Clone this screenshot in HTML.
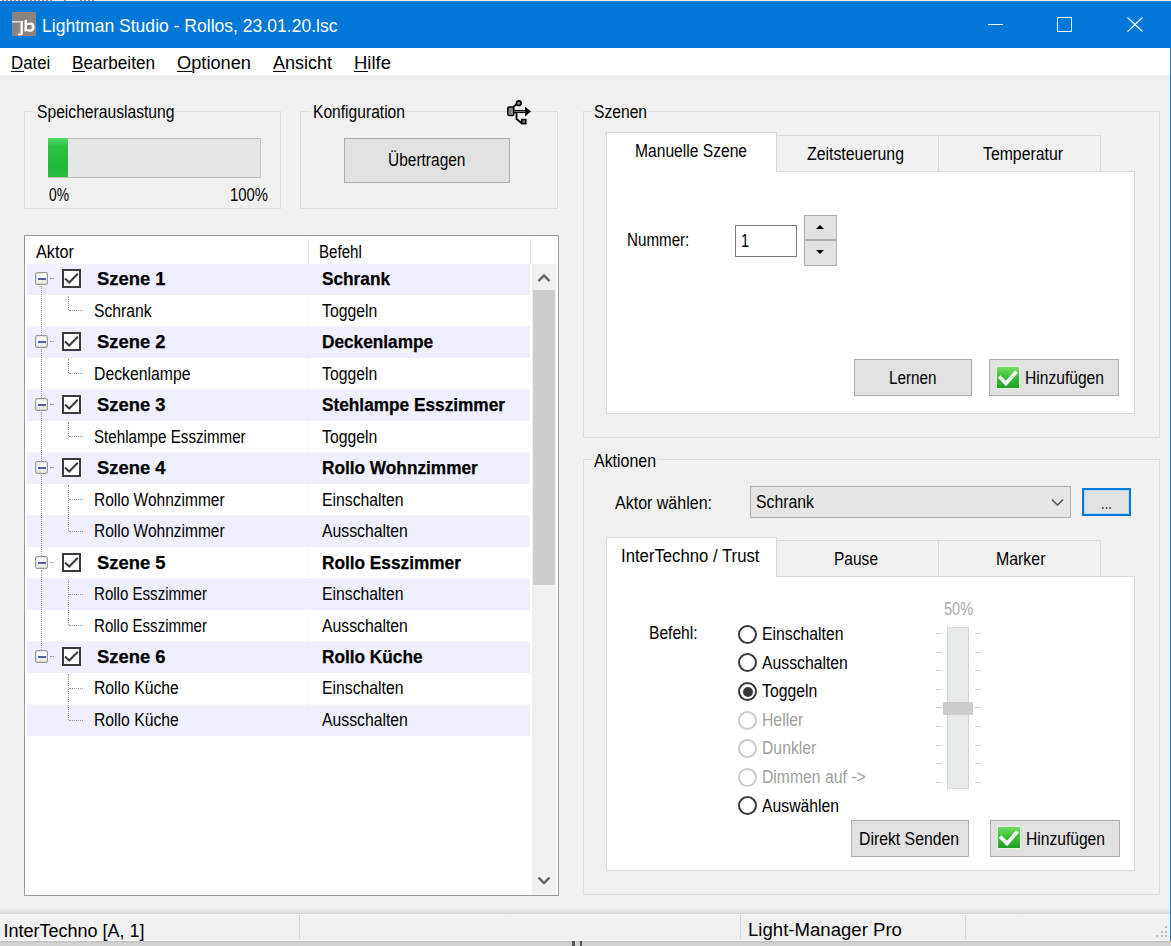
<!DOCTYPE html>
<html><head><meta charset="utf-8"><style>
html,body{margin:0;padding:0;}
body{width:1171px;height:946px;position:relative;overflow:hidden;background:#f0f0f0;font-family:"Liberation Sans",sans-serif;}
body>div{position:absolute;}
.t{white-space:nowrap;}
</style></head><body>
<div style="left:0px;top:0px;width:1171px;height:1px;background:#eef2f6;"></div>
<div style="left:2px;top:0;width:52px;height:1px;background:repeating-linear-gradient(90deg,#8d97a3 0 2px,#eef2f6 2px 4px);"></div>
<div style="left:64px;top:0px;width:2px;height:1px;background:#8d97a3;"></div>
<div style="left:80px;top:0;width:16px;height:1px;background:repeating-linear-gradient(90deg,#8d97a3 0 2px,#eef2f6 2px 4px);"></div>
<div style="left:0px;top:1px;width:1171px;height:47px;background:#0078d7;"></div>
<svg style="position:absolute;left:12px;top:12px" width="24" height="24" viewBox="0 0 24 24">
<rect width="24" height="24" fill="#8a847f"/>
<rect x="0" y="9" width="8" height="1.6" fill="#e0dcd8"/>
<path d="M8.5 9 L10.8 9 L10.8 21.5 Q10.8 23.3 9 23.3 L6 23.3 L6 21.6 L8.5 21.6 Z" fill="#fff"/>
<path d="M12.5 8 L15 8 L15 11.2 Q16 10.6 18 10.6 Q22.6 10.6 22.6 15 Q22.6 19.8 18 19.8 Q15.6 19.8 14.6 18.8 L14.4 19.6 L12.5 19.6 Z M15 13.2 L15 17 Q15.8 17.6 17.6 17.6 Q20 17.6 20 15.1 Q20 12.8 17.6 12.8 Q15.8 12.8 15 13.2 Z" fill="#fff" fill-rule="evenodd"/>
</svg>
<div class="t" style="left:42.00px;top:16.50px;font-size:18px;line-height:18px;color:#fff;transform:scaleX(0.9746);transform-origin:0 0;">Lightman Studio - Rollos, 23.01.20.lsc</div>
<div style="left:988px;top:24px;width:15px;height:1px;background:#fff;"></div>
<div style="left:1057px;top:17px;width:15px;height:15px;border:1px solid #fff;box-sizing:border-box;"></div>
<svg style="position:absolute;left:1126px;top:16px" width="18" height="17"><path d="M1.5 1.5 L16.5 15.5 M16.5 1.5 L1.5 15.5" stroke="#fff" stroke-width="1.1" fill="none"/></svg>
<div style="left:0px;top:48px;width:1170px;height:27px;background:#fff;"></div>
<div style="left:1170px;top:48px;width:1px;height:893px;background:#2a7bc4;"></div>
<div class="t" style="left:11.30px;top:54.55px;font-size:17.5px;line-height:17.5px;color:#000;transform:scaleX(0.9618);transform-origin:0 0;">Datei</div>
<div style="left:11px;top:71px;width:13px;height:1px;background:#000;"></div>
<div class="t" style="left:72.40px;top:54.55px;font-size:17.5px;line-height:17.5px;color:#000;transform:scaleX(0.9809);transform-origin:0 0;">Bearbeiten</div>
<div style="left:72px;top:71px;width:13px;height:1px;background:#000;"></div>
<div class="t" style="left:177.00px;top:54.55px;font-size:17.5px;line-height:17.5px;color:#000;transform:scaleX(1.0415);transform-origin:0 0;">Optionen</div>
<div style="left:177px;top:71px;width:15px;height:1px;background:#000;"></div>
<div class="t" style="left:273.30px;top:54.55px;font-size:17.5px;line-height:17.5px;color:#000;transform:scaleX(1.0296);transform-origin:0 0;">Ansicht</div>
<div style="left:273px;top:71px;width:13px;height:1px;background:#000;"></div>
<div class="t" style="left:354.20px;top:54.55px;font-size:17.5px;line-height:17.5px;color:#000;transform:scaleX(1.0543);transform-origin:0 0;">Hilfe</div>
<div style="left:354px;top:71px;width:14px;height:1px;background:#000;"></div>
<div style="left:24px;top:111px;width:257px;height:98px;border:1px solid #dcdcdc;box-sizing:border-box;"></div>
<div style="left:34px;top:103px;width:141px;height:16px;background:#f0f0f0;"></div>
<div class="t" style="left:36.50px;top:103.75px;font-size:17.5px;line-height:17.5px;color:#000;transform:scaleX(0.8944);transform-origin:0 0;">Speicherauslastung</div>
<div style="left:48px;top:138px;width:213px;height:40px;border:1px solid #bcbcbc;box-sizing:border-box;background:#e6e6e6;"></div>
<div style="left:48px;top:138px;width:20px;height:39px;background:linear-gradient(#58dc6c,#2cc244 20%,#20b83a 80%,#2bbf45);"></div>
<div class="t" style="left:48.50px;top:186.75px;font-size:17.5px;line-height:17.5px;color:#000;transform:scaleX(0.7909);transform-origin:0 0;">0%</div>
<div class="t" style="left:230.00px;top:186.75px;font-size:17.5px;line-height:17.5px;color:#000;transform:scaleX(0.8482);transform-origin:0 0;">100%</div>
<div style="left:300px;top:111px;width:258px;height:98px;border:1px solid #dcdcdc;box-sizing:border-box;"></div>
<div style="left:311px;top:103px;width:95px;height:16px;background:#f0f0f0;"></div>
<div class="t" style="left:312.60px;top:103.75px;font-size:17.5px;line-height:17.5px;color:#000;transform:scaleX(0.8918);transform-origin:0 0;">Konfiguration</div>
<svg style="position:absolute;left:500px;top:96px" width="36" height="32" viewBox="0 0 36 32">
<path d="M12.5 12 L17.5 7" stroke="#000" stroke-width="1.8" fill="none"/>
<circle cx="18.8" cy="7.2" r="2.3" fill="#888" stroke="#000" stroke-width="1.6"/>
<rect x="7.8" y="11" width="6" height="8.5" rx="1.6" fill="#8a8a8a" stroke="#000" stroke-width="1.6"/>
<path d="M13.5 15.5 L26 15.5" stroke="#000" stroke-width="3.2" fill="none"/>
<path d="M14 15.5 L25 15.5" stroke="#777" stroke-width="1" fill="none"/>
<path d="M25 10.5 L31 15.5 L25 20.5 Z" fill="#000"/>
<path d="M16.5 16 L16.5 23 L21.5 27" stroke="#000" stroke-width="1.8" fill="none"/>
<rect x="21.8" y="23.6" width="4" height="4" fill="#888" stroke="#000" stroke-width="1.6"/>
</svg>
<div style="left:344px;top:138px;width:166px;height:45px;background:#e1e1e1;border:1px solid #adadad;box-sizing:border-box;"></div>
<div class="t" style="left:388.00px;top:152.25px;font-size:17.5px;line-height:17.5px;color:#000;transform:scaleX(0.8848);transform-origin:0 0;">Übertragen</div>
<div style="left:24px;top:235px;width:535px;height:661px;border:1px solid #9a9a9a;box-sizing:border-box;background:#fff;"></div>
<div class="t" style="left:36.00px;top:244.25px;font-size:17.5px;line-height:17.5px;color:#000;transform:scaleX(0.9299);transform-origin:0 0;">Aktor</div>
<div class="t" style="left:319.00px;top:244.25px;font-size:17.5px;line-height:17.5px;color:#000;transform:scaleX(0.8627);transform-origin:0 0;">Befehl</div>
<div style="left:308px;top:239px;width:1px;height:25px;background:#e5e5e5;"></div>
<div style="left:530px;top:239px;width:1px;height:25px;background:#e5e5e5;"></div>
<div style="left:27px;top:264.00px;width:503px;height:31.47px;background:#efeffd;"></div>
<div style="left:27px;top:294.47px;width:503px;height:1px;border-top:1px dotted #eeeef4;"></div>
<div class="t" style="left:96.80px;top:271.35px;font-size:17.5px;line-height:17.5px;font-weight:bold;color:#000;transform:scaleX(1.0500);transform-origin:0 0;-webkit-text-stroke:0.25px #000;">Szene 1</div>
<div class="t" style="left:321.70px;top:271.35px;font-size:17.5px;line-height:17.5px;font-weight:bold;color:#000;transform:scaleX(0.9850);transform-origin:0 0;-webkit-text-stroke:0.25px #000;">Schrank</div>
<div style="left:27px;top:325.94px;width:503px;height:1px;border-top:1px dotted #eeeef4;"></div>
<div class="t" style="left:94.00px;top:302.82px;font-size:17.5px;line-height:17.5px;color:#000;transform:scaleX(0.8987);transform-origin:0 0;">Schrank</div>
<div class="t" style="left:321.50px;top:302.82px;font-size:17.5px;line-height:17.5px;color:#000;transform:scaleX(0.9000);transform-origin:0 0;">Toggeln</div>
<div style="left:27px;top:326.94px;width:503px;height:31.47px;background:#efeffd;"></div>
<div style="left:27px;top:357.41px;width:503px;height:1px;border-top:1px dotted #eeeef4;"></div>
<div class="t" style="left:96.80px;top:334.29px;font-size:17.5px;line-height:17.5px;font-weight:bold;color:#000;transform:scaleX(1.0500);transform-origin:0 0;-webkit-text-stroke:0.25px #000;">Szene 2</div>
<div class="t" style="left:321.70px;top:334.29px;font-size:17.5px;line-height:17.5px;font-weight:bold;color:#000;transform:scaleX(0.9850);transform-origin:0 0;-webkit-text-stroke:0.25px #000;">Deckenlampe</div>
<div style="left:27px;top:388.88px;width:503px;height:1px;border-top:1px dotted #eeeef4;"></div>
<div class="t" style="left:94.00px;top:365.76px;font-size:17.5px;line-height:17.5px;color:#000;transform:scaleX(0.9018);transform-origin:0 0;">Deckenlampe</div>
<div class="t" style="left:321.50px;top:365.76px;font-size:17.5px;line-height:17.5px;color:#000;transform:scaleX(0.9000);transform-origin:0 0;">Toggeln</div>
<div style="left:27px;top:389.88px;width:503px;height:31.47px;background:#efeffd;"></div>
<div style="left:27px;top:420.35px;width:503px;height:1px;border-top:1px dotted #eeeef4;"></div>
<div class="t" style="left:96.80px;top:397.23px;font-size:17.5px;line-height:17.5px;font-weight:bold;color:#000;transform:scaleX(1.0500);transform-origin:0 0;-webkit-text-stroke:0.25px #000;">Szene 3</div>
<div class="t" style="left:321.70px;top:397.23px;font-size:17.5px;line-height:17.5px;font-weight:bold;color:#000;transform:scaleX(0.9850);transform-origin:0 0;-webkit-text-stroke:0.25px #000;">Stehlampe Esszimmer</div>
<div style="left:27px;top:451.82px;width:503px;height:1px;border-top:1px dotted #eeeef4;"></div>
<div class="t" style="left:94.00px;top:428.70px;font-size:17.5px;line-height:17.5px;color:#000;transform:scaleX(0.8664);transform-origin:0 0;">Stehlampe Esszimmer</div>
<div class="t" style="left:321.50px;top:428.70px;font-size:17.5px;line-height:17.5px;color:#000;transform:scaleX(0.9000);transform-origin:0 0;">Toggeln</div>
<div style="left:27px;top:452.82px;width:503px;height:31.47px;background:#efeffd;"></div>
<div style="left:27px;top:483.29px;width:503px;height:1px;border-top:1px dotted #eeeef4;"></div>
<div class="t" style="left:96.80px;top:460.17px;font-size:17.5px;line-height:17.5px;font-weight:bold;color:#000;transform:scaleX(1.0500);transform-origin:0 0;-webkit-text-stroke:0.25px #000;">Szene 4</div>
<div class="t" style="left:321.70px;top:460.17px;font-size:17.5px;line-height:17.5px;font-weight:bold;color:#000;transform:scaleX(0.9850);transform-origin:0 0;-webkit-text-stroke:0.25px #000;">Rollo Wohnzimmer</div>
<div style="left:27px;top:514.76px;width:503px;height:1px;border-top:1px dotted #eeeef4;"></div>
<div class="t" style="left:94.00px;top:491.64px;font-size:17.5px;line-height:17.5px;color:#000;transform:scaleX(0.8853);transform-origin:0 0;">Rollo Wohnzimmer</div>
<div class="t" style="left:321.50px;top:491.64px;font-size:17.5px;line-height:17.5px;color:#000;transform:scaleX(0.9000);transform-origin:0 0;">Einschalten</div>
<div style="left:27px;top:515.76px;width:503px;height:31.47px;background:#efeffd;"></div>
<div style="left:27px;top:546.23px;width:503px;height:1px;border-top:1px dotted #eeeef4;"></div>
<div class="t" style="left:94.00px;top:523.11px;font-size:17.5px;line-height:17.5px;color:#000;transform:scaleX(0.8853);transform-origin:0 0;">Rollo Wohnzimmer</div>
<div class="t" style="left:321.50px;top:523.11px;font-size:17.5px;line-height:17.5px;color:#000;transform:scaleX(0.9000);transform-origin:0 0;">Ausschalten</div>
<div style="left:27px;top:577.70px;width:503px;height:1px;border-top:1px dotted #eeeef4;"></div>
<div class="t" style="left:96.80px;top:554.58px;font-size:17.5px;line-height:17.5px;font-weight:bold;color:#000;transform:scaleX(1.0500);transform-origin:0 0;-webkit-text-stroke:0.25px #000;">Szene 5</div>
<div class="t" style="left:321.70px;top:554.58px;font-size:17.5px;line-height:17.5px;font-weight:bold;color:#000;transform:scaleX(0.9850);transform-origin:0 0;-webkit-text-stroke:0.25px #000;">Rollo Esszimmer</div>
<div style="left:27px;top:578.70px;width:503px;height:31.47px;background:#efeffd;"></div>
<div style="left:27px;top:609.17px;width:503px;height:1px;border-top:1px dotted #eeeef4;"></div>
<div class="t" style="left:94.00px;top:586.05px;font-size:17.5px;line-height:17.5px;color:#000;transform:scaleX(0.8610);transform-origin:0 0;">Rollo Esszimmer</div>
<div class="t" style="left:321.50px;top:586.05px;font-size:17.5px;line-height:17.5px;color:#000;transform:scaleX(0.9000);transform-origin:0 0;">Einschalten</div>
<div style="left:27px;top:640.64px;width:503px;height:1px;border-top:1px dotted #eeeef4;"></div>
<div class="t" style="left:94.00px;top:617.52px;font-size:17.5px;line-height:17.5px;color:#000;transform:scaleX(0.8610);transform-origin:0 0;">Rollo Esszimmer</div>
<div class="t" style="left:321.50px;top:617.52px;font-size:17.5px;line-height:17.5px;color:#000;transform:scaleX(0.9000);transform-origin:0 0;">Ausschalten</div>
<div style="left:27px;top:641.64px;width:503px;height:31.47px;background:#efeffd;"></div>
<div style="left:27px;top:672.11px;width:503px;height:1px;border-top:1px dotted #eeeef4;"></div>
<div class="t" style="left:96.80px;top:648.99px;font-size:17.5px;line-height:17.5px;font-weight:bold;color:#000;transform:scaleX(1.0500);transform-origin:0 0;-webkit-text-stroke:0.25px #000;">Szene 6</div>
<div class="t" style="left:321.70px;top:648.99px;font-size:17.5px;line-height:17.5px;font-weight:bold;color:#000;transform:scaleX(0.9850);transform-origin:0 0;-webkit-text-stroke:0.25px #000;">Rollo Küche</div>
<div style="left:27px;top:703.58px;width:503px;height:1px;border-top:1px dotted #eeeef4;"></div>
<div class="t" style="left:94.00px;top:680.46px;font-size:17.5px;line-height:17.5px;color:#000;transform:scaleX(0.8980);transform-origin:0 0;">Rollo Küche</div>
<div class="t" style="left:321.50px;top:680.46px;font-size:17.5px;line-height:17.5px;color:#000;transform:scaleX(0.9000);transform-origin:0 0;">Einschalten</div>
<div style="left:27px;top:704.58px;width:503px;height:31.47px;background:#efeffd;"></div>
<div style="left:27px;top:735.05px;width:503px;height:1px;border-top:1px dotted #eeeef4;"></div>
<div class="t" style="left:94.00px;top:711.93px;font-size:17.5px;line-height:17.5px;color:#000;transform:scaleX(0.8980);transform-origin:0 0;">Rollo Küche</div>
<div class="t" style="left:321.50px;top:711.93px;font-size:17.5px;line-height:17.5px;color:#000;transform:scaleX(0.9000);transform-origin:0 0;">Ausschalten</div>
<div style="left:308px;top:264px;width:0;height:471px;border-left:1px dotted #eeeef4;"></div>
<div style="left:35px;top:272px;width:13px;height:13px;box-sizing:border-box;border:1px solid #9c9c9c;border-radius:2px;background:linear-gradient(#fff,#fbfbf8 45%,#e4e4d6);box-shadow:inset 0 0 0 0.5px #c8c8c8;"></div>
<div style="left:37.5px;top:278px;width:8px;height:2px;background:#5060a8;"></div>
<div style="left:50px;top:278px;width:4px;height:1px;border-top:1px dotted #999;"></div>
<div style="left:62px;top:269px;width:19px;height:19px;box-sizing:border-box;border:2px solid #3c3c3c;background:#fff;"></div>
<svg style="position:absolute;left:62px;top:269px" width="19" height="19"><path d="M3 9.5 L7.2 13.5 L15.8 4.8" stroke="#3a3a3a" stroke-width="2" fill="none"/></svg>
<div style="left:41px;top:286px;width:0;height:49px;border-left:1px dotted #999;"></div>
<div style="left:68px;top:296px;width:0;height:14px;border-left:1px dotted #999;"></div>
<div style="left:69px;top:310px;width:14px;height:0;border-top:1px dotted #999;"></div>
<div style="left:35px;top:335px;width:13px;height:13px;box-sizing:border-box;border:1px solid #9c9c9c;border-radius:2px;background:linear-gradient(#fff,#fbfbf8 45%,#e4e4d6);box-shadow:inset 0 0 0 0.5px #c8c8c8;"></div>
<div style="left:37.5px;top:341px;width:8px;height:2px;background:#5060a8;"></div>
<div style="left:50px;top:341px;width:4px;height:1px;border-top:1px dotted #999;"></div>
<div style="left:62px;top:332px;width:19px;height:19px;box-sizing:border-box;border:2px solid #3c3c3c;background:#fff;"></div>
<svg style="position:absolute;left:62px;top:332px" width="19" height="19"><path d="M3 9.5 L7.2 13.5 L15.8 4.8" stroke="#3a3a3a" stroke-width="2" fill="none"/></svg>
<div style="left:41px;top:349px;width:0;height:49px;border-left:1px dotted #999;"></div>
<div style="left:68px;top:359px;width:0;height:14px;border-left:1px dotted #999;"></div>
<div style="left:69px;top:373px;width:14px;height:0;border-top:1px dotted #999;"></div>
<div style="left:35px;top:398px;width:13px;height:13px;box-sizing:border-box;border:1px solid #9c9c9c;border-radius:2px;background:linear-gradient(#fff,#fbfbf8 45%,#e4e4d6);box-shadow:inset 0 0 0 0.5px #c8c8c8;"></div>
<div style="left:37.5px;top:404px;width:8px;height:2px;background:#5060a8;"></div>
<div style="left:50px;top:404px;width:4px;height:1px;border-top:1px dotted #999;"></div>
<div style="left:62px;top:395px;width:19px;height:19px;box-sizing:border-box;border:2px solid #3c3c3c;background:#fff;"></div>
<svg style="position:absolute;left:62px;top:395px" width="19" height="19"><path d="M3 9.5 L7.2 13.5 L15.8 4.8" stroke="#3a3a3a" stroke-width="2" fill="none"/></svg>
<div style="left:41px;top:412px;width:0;height:49px;border-left:1px dotted #999;"></div>
<div style="left:68px;top:422px;width:0;height:14px;border-left:1px dotted #999;"></div>
<div style="left:69px;top:436px;width:14px;height:0;border-top:1px dotted #999;"></div>
<div style="left:35px;top:461px;width:13px;height:13px;box-sizing:border-box;border:1px solid #9c9c9c;border-radius:2px;background:linear-gradient(#fff,#fbfbf8 45%,#e4e4d6);box-shadow:inset 0 0 0 0.5px #c8c8c8;"></div>
<div style="left:37.5px;top:467px;width:8px;height:2px;background:#5060a8;"></div>
<div style="left:50px;top:467px;width:4px;height:1px;border-top:1px dotted #999;"></div>
<div style="left:62px;top:458px;width:19px;height:19px;box-sizing:border-box;border:2px solid #3c3c3c;background:#fff;"></div>
<svg style="position:absolute;left:62px;top:458px" width="19" height="19"><path d="M3 9.5 L7.2 13.5 L15.8 4.8" stroke="#3a3a3a" stroke-width="2" fill="none"/></svg>
<div style="left:41px;top:475px;width:0;height:81px;border-left:1px dotted #999;"></div>
<div style="left:68px;top:485px;width:0;height:46px;border-left:1px dotted #999;"></div>
<div style="left:69px;top:499px;width:14px;height:0;border-top:1px dotted #999;"></div>
<div style="left:69px;top:531px;width:14px;height:0;border-top:1px dotted #999;"></div>
<div style="left:35px;top:556px;width:13px;height:13px;box-sizing:border-box;border:1px solid #9c9c9c;border-radius:2px;background:linear-gradient(#fff,#fbfbf8 45%,#e4e4d6);box-shadow:inset 0 0 0 0.5px #c8c8c8;"></div>
<div style="left:37.5px;top:562px;width:8px;height:2px;background:#5060a8;"></div>
<div style="left:50px;top:562px;width:4px;height:1px;border-top:1px dotted #999;"></div>
<div style="left:62px;top:553px;width:19px;height:19px;box-sizing:border-box;border:2px solid #3c3c3c;background:#fff;"></div>
<svg style="position:absolute;left:62px;top:553px" width="19" height="19"><path d="M3 9.5 L7.2 13.5 L15.8 4.8" stroke="#3a3a3a" stroke-width="2" fill="none"/></svg>
<div style="left:41px;top:570px;width:0;height:80px;border-left:1px dotted #999;"></div>
<div style="left:68px;top:580px;width:0;height:45px;border-left:1px dotted #999;"></div>
<div style="left:69px;top:594px;width:14px;height:0;border-top:1px dotted #999;"></div>
<div style="left:69px;top:625px;width:14px;height:0;border-top:1px dotted #999;"></div>
<div style="left:35px;top:650px;width:13px;height:13px;box-sizing:border-box;border:1px solid #9c9c9c;border-radius:2px;background:linear-gradient(#fff,#fbfbf8 45%,#e4e4d6);box-shadow:inset 0 0 0 0.5px #c8c8c8;"></div>
<div style="left:37.5px;top:656px;width:8px;height:2px;background:#5060a8;"></div>
<div style="left:50px;top:656px;width:4px;height:1px;border-top:1px dotted #999;"></div>
<div style="left:62px;top:647px;width:19px;height:19px;box-sizing:border-box;border:2px solid #3c3c3c;background:#fff;"></div>
<svg style="position:absolute;left:62px;top:647px" width="19" height="19"><path d="M3 9.5 L7.2 13.5 L15.8 4.8" stroke="#3a3a3a" stroke-width="2" fill="none"/></svg>
<div style="left:68px;top:674px;width:0;height:46px;border-left:1px dotted #999;"></div>
<div style="left:69px;top:688px;width:14px;height:0;border-top:1px dotted #999;"></div>
<div style="left:69px;top:720px;width:14px;height:0;border-top:1px dotted #999;"></div>
<div style="left:532px;top:264px;width:24px;height:631px;background:#f0f0f0;"></div>
<div style="left:533px;top:290px;width:22px;height:295px;background:#cdcdcd;"></div>
<svg style="position:absolute;left:537px;top:271px" width="14" height="13"><path d="M1.5 10 L7 4.5 L12.5 10" stroke="#606060" stroke-width="2.4" fill="none"/></svg>
<svg style="position:absolute;left:537px;top:874px" width="14" height="13"><path d="M1.5 3.5 L7 9 L12.5 3.5" stroke="#606060" stroke-width="2.4" fill="none"/></svg>
<div style="left:583px;top:111px;width:577px;height:327px;border:1px solid #dcdcdc;box-sizing:border-box;"></div>
<div style="left:592px;top:103px;width:56px;height:16px;background:#f0f0f0;"></div>
<div class="t" style="left:594.00px;top:104.05px;font-size:17.5px;line-height:17.5px;color:#000;transform:scaleX(0.8934);transform-origin:0 0;">Szenen</div>
<div style="left:606px;top:171px;width:529px;height:243px;background:#fff;border:1px solid #d9d9d9;box-sizing:border-box;"></div>
<div style="left:776px;top:135px;width:163px;height:36px;background:#f0f0f0;border:1px solid #d9d9d9;border-bottom:none;box-sizing:border-box;"></div>
<div style="left:938px;top:135px;width:163px;height:36px;background:#f0f0f0;border:1px solid #d9d9d9;border-bottom:none;box-sizing:border-box;"></div>
<div style="left:606px;top:132px;width:171px;height:40px;background:#fff;border:1px solid #d9d9d9;border-bottom:none;box-sizing:border-box;"></div>
<div class="t" style="left:635.30px;top:142.75px;font-size:17.5px;line-height:17.5px;color:#000;transform:scaleX(0.8926);transform-origin:0 0;">Manuelle Szene</div>
<div class="t" style="left:807.00px;top:145.55px;font-size:17.5px;line-height:17.5px;color:#000;transform:scaleX(0.9064);transform-origin:0 0;">Zeitsteuerung</div>
<div class="t" style="left:983.00px;top:145.55px;font-size:17.5px;line-height:17.5px;color:#000;transform:scaleX(0.9034);transform-origin:0 0;">Temperatur</div>
<div class="t" style="left:627.40px;top:231.55px;font-size:17.5px;line-height:17.5px;color:#000;transform:scaleX(0.8662);transform-origin:0 0;">Nummer:</div>
<div style="left:735px;top:225px;width:62px;height:32px;background:#fff;border:1px solid #7a7a7a;box-sizing:border-box;"></div>
<div class="t" style="left:741.00px;top:233.25px;font-size:17.5px;line-height:17.5px;color:#000;transform:scaleX(0.8237);transform-origin:0 0;">1</div>
<div style="left:804px;top:215px;width:33px;height:25px;background:#e1e1e1;border:1px solid #adadad;box-sizing:border-box;"></div>
<div style="left:804px;top:240px;width:33px;height:26px;background:#e1e1e1;border:1px solid #adadad;box-sizing:border-box;"></div>
<svg style="position:absolute;left:814px;top:222px" width="12" height="10"><path d="M2 7 L6 3 L10 7 Z" fill="#000"/></svg>
<svg style="position:absolute;left:814px;top:247px" width="12" height="10"><path d="M2 3 L6 7 L10 3 Z" fill="#000"/></svg>
<div style="left:854px;top:359px;width:118px;height:37px;background:#e1e1e1;border:1px solid #adadad;box-sizing:border-box;"></div>
<div class="t" style="left:888.60px;top:370.25px;font-size:17.5px;line-height:17.5px;color:#000;transform:scaleX(0.8714);transform-origin:0 0;">Lernen</div>
<div style="left:989px;top:359px;width:130px;height:37px;background:#e1e1e1;border:1px solid #adadad;box-sizing:border-box;"></div>
<svg style="position:absolute;left:996px;top:366px" width="24" height="23" viewBox="0 0 24 23">
<defs><linearGradient id="g996366" x1="0" y1="0" x2="0" y2="1"><stop offset="0" stop-color="#7edc6c"/><stop offset="0.45" stop-color="#3cc23a"/><stop offset="1" stop-color="#1f9e20"/></linearGradient></defs>
<rect x="0.5" y="0.5" width="23" height="22" fill="url(#g996366)" stroke="#dff5d8" stroke-width="1"/>
<path d="M3 10.5 L10 17.5 L20.5 5.5" stroke="#f4f4f4" stroke-width="3.8" fill="none" stroke-linejoin="miter"/></svg>
<div class="t" style="left:1025.00px;top:370.25px;font-size:17.5px;line-height:17.5px;color:#000;transform:scaleX(0.8922);transform-origin:0 0;">Hinzufügen</div>
<div style="left:583px;top:459px;width:577px;height:436px;border:1px solid #dcdcdc;box-sizing:border-box;"></div>
<div style="left:592px;top:451px;width:65px;height:16px;background:#f0f0f0;"></div>
<div class="t" style="left:594.00px;top:452.55px;font-size:17.5px;line-height:17.5px;color:#000;transform:scaleX(0.9108);transform-origin:0 0;">Aktionen</div>
<div class="t" style="left:615.00px;top:495.25px;font-size:17.5px;line-height:17.5px;color:#000;transform:scaleX(0.9147);transform-origin:0 0;">Aktor wählen:</div>
<div style="left:750px;top:486px;width:321px;height:32px;background:#e5e5e5;border:1px solid #adadad;box-sizing:border-box;"></div>
<div class="t" style="left:756.30px;top:494.25px;font-size:17.5px;line-height:17.5px;color:#000;transform:scaleX(0.9000);transform-origin:0 0;">Schrank</div>
<svg style="position:absolute;left:1050px;top:496px" width="16" height="12"><path d="M2 3.5 L7.5 9 L13 3.5" stroke="#5a5a5a" stroke-width="1.6" fill="none"/></svg>
<div style="left:1082px;top:488px;width:49px;height:28px;background:#e1e1e1;border:2px solid #0078d7;box-shadow:inset 0 0 0 1px #b9d7f0;box-sizing:border-box;"></div>
<div class="t" style="left:1100.50px;top:495.25px;font-size:17.5px;line-height:17.5px;color:#333;transform:scaleX(0.7528);transform-origin:0 0;">...</div>
<div style="left:606px;top:576px;width:529px;height:295px;background:#fff;border:1px solid #d9d9d9;box-sizing:border-box;"></div>
<div style="left:776px;top:540px;width:163px;height:36px;background:#f0f0f0;border:1px solid #d9d9d9;border-bottom:none;box-sizing:border-box;"></div>
<div style="left:938px;top:540px;width:163px;height:36px;background:#f0f0f0;border:1px solid #d9d9d9;border-bottom:none;box-sizing:border-box;"></div>
<div style="left:606px;top:537px;width:171px;height:40px;background:#fff;border:1px solid #d9d9d9;border-bottom:none;box-sizing:border-box;"></div>
<div class="t" style="left:621.00px;top:548.45px;font-size:17.5px;line-height:17.5px;color:#000;transform:scaleX(0.9551);transform-origin:0 0;">InterTechno / Trust</div>
<div class="t" style="left:834.00px;top:551.15px;font-size:17.5px;line-height:17.5px;color:#000;transform:scaleX(0.8869);transform-origin:0 0;">Pause</div>
<div class="t" style="left:996.00px;top:551.15px;font-size:17.5px;line-height:17.5px;color:#000;transform:scaleX(0.9077);transform-origin:0 0;">Marker</div>
<div class="t" style="left:648.80px;top:624.95px;font-size:17.5px;line-height:17.5px;color:#000;transform:scaleX(0.8915);transform-origin:0 0;">Befehl:</div>
<div style="left:738px;top:624.90px;width:19px;height:19px;box-sizing:border-box;border:2px solid #3a3a3a;border-radius:50%;background:#fff;"></div>
<div class="t" style="left:762.30px;top:626.15px;font-size:17.5px;line-height:17.5px;color:#000;transform:scaleX(0.9000);transform-origin:0 0;">Einschalten</div>
<div style="left:738px;top:653.48px;width:19px;height:19px;box-sizing:border-box;border:2px solid #3a3a3a;border-radius:50%;background:#fff;"></div>
<div class="t" style="left:762.30px;top:654.73px;font-size:17.5px;line-height:17.5px;color:#000;transform:scaleX(0.9000);transform-origin:0 0;">Ausschalten</div>
<div style="left:738px;top:682.06px;width:19px;height:19px;box-sizing:border-box;border:2px solid #3a3a3a;border-radius:50%;background:#fff;"></div>
<div style="left:742.5px;top:686.56px;width:10px;height:10px;border-radius:50%;background:#3a3a3a;"></div>
<div class="t" style="left:762.30px;top:683.31px;font-size:17.5px;line-height:17.5px;color:#000;transform:scaleX(0.9000);transform-origin:0 0;">Toggeln</div>
<div style="left:738px;top:710.64px;width:19px;height:19px;box-sizing:border-box;border:2px solid #cbcbcb;border-radius:50%;background:#fff;"></div>
<div class="t" style="left:762.30px;top:711.89px;font-size:17.5px;line-height:17.5px;color:#a0a0a0;transform:scaleX(0.9000);transform-origin:0 0;">Heller</div>
<div style="left:738px;top:739.22px;width:19px;height:19px;box-sizing:border-box;border:2px solid #cbcbcb;border-radius:50%;background:#fff;"></div>
<div class="t" style="left:762.30px;top:740.47px;font-size:17.5px;line-height:17.5px;color:#a0a0a0;transform:scaleX(0.9000);transform-origin:0 0;">Dunkler</div>
<div style="left:738px;top:767.80px;width:19px;height:19px;box-sizing:border-box;border:2px solid #cbcbcb;border-radius:50%;background:#fff;"></div>
<div class="t" style="left:762.30px;top:769.05px;font-size:17.5px;line-height:17.5px;color:#a0a0a0;transform:scaleX(0.9000);transform-origin:0 0;">Dimmen auf -></div>
<div style="left:738px;top:796.38px;width:19px;height:19px;box-sizing:border-box;border:2px solid #3a3a3a;border-radius:50%;background:#fff;"></div>
<div class="t" style="left:762.30px;top:797.63px;font-size:17.5px;line-height:17.5px;color:#000;transform:scaleX(0.9000);transform-origin:0 0;">Auswählen</div>
<div class="t" style="left:944.00px;top:600.75px;font-size:17.5px;line-height:17.5px;color:#a8a8a8;transform:scaleX(0.8286);transform-origin:0 0;">50%</div>
<div style="left:947px;top:627px;width:22px;height:162px;background:#e7eaea;border:1px solid #d6d6d6;box-sizing:border-box;"></div>
<div style="left:936px;top:633.0px;width:6px;height:1px;background:#cfcfcf;"></div>
<div style="left:975px;top:633.0px;width:6px;height:1px;background:#cfcfcf;"></div>
<div style="left:936px;top:651.6px;width:6px;height:1px;background:#cfcfcf;"></div>
<div style="left:975px;top:651.6px;width:6px;height:1px;background:#cfcfcf;"></div>
<div style="left:936px;top:670.2px;width:6px;height:1px;background:#cfcfcf;"></div>
<div style="left:975px;top:670.2px;width:6px;height:1px;background:#cfcfcf;"></div>
<div style="left:936px;top:688.8px;width:6px;height:1px;background:#cfcfcf;"></div>
<div style="left:975px;top:688.8px;width:6px;height:1px;background:#cfcfcf;"></div>
<div style="left:936px;top:707.4px;width:6px;height:1px;background:#cfcfcf;"></div>
<div style="left:975px;top:707.4px;width:6px;height:1px;background:#cfcfcf;"></div>
<div style="left:936px;top:726.0px;width:6px;height:1px;background:#cfcfcf;"></div>
<div style="left:975px;top:726.0px;width:6px;height:1px;background:#cfcfcf;"></div>
<div style="left:936px;top:744.6px;width:6px;height:1px;background:#cfcfcf;"></div>
<div style="left:975px;top:744.6px;width:6px;height:1px;background:#cfcfcf;"></div>
<div style="left:936px;top:763.2px;width:6px;height:1px;background:#cfcfcf;"></div>
<div style="left:975px;top:763.2px;width:6px;height:1px;background:#cfcfcf;"></div>
<div style="left:936px;top:781.8px;width:6px;height:1px;background:#cfcfcf;"></div>
<div style="left:975px;top:781.8px;width:6px;height:1px;background:#cfcfcf;"></div>
<div style="left:943px;top:702px;width:30px;height:13px;background:#cdcdcd;"></div>
<div style="left:851px;top:820px;width:118px;height:37px;background:#e1e1e1;border:1px solid #adadad;box-sizing:border-box;"></div>
<div class="t" style="left:859.00px;top:831.25px;font-size:17.5px;line-height:17.5px;color:#000;transform:scaleX(0.9020);transform-origin:0 0;">Direkt Senden</div>
<div style="left:990px;top:820px;width:130px;height:37px;background:#e1e1e1;border:1px solid #adadad;box-sizing:border-box;"></div>
<svg style="position:absolute;left:997px;top:826px" width="24" height="23" viewBox="0 0 24 23">
<defs><linearGradient id="g997826" x1="0" y1="0" x2="0" y2="1"><stop offset="0" stop-color="#7edc6c"/><stop offset="0.45" stop-color="#3cc23a"/><stop offset="1" stop-color="#1f9e20"/></linearGradient></defs>
<rect x="0.5" y="0.5" width="23" height="22" fill="url(#g997826)" stroke="#dff5d8" stroke-width="1"/>
<path d="M3 10.5 L10 17.5 L20.5 5.5" stroke="#f4f4f4" stroke-width="3.8" fill="none" stroke-linejoin="miter"/></svg>
<div class="t" style="left:1026.00px;top:831.25px;font-size:17.5px;line-height:17.5px;color:#000;transform:scaleX(0.8922);transform-origin:0 0;">Hinzufügen</div>
<div style="left:0px;top:909px;width:1170px;height:4px;background:linear-gradient(#ebebeb,#dcdcdc);"></div>
<div style="left:0px;top:913px;width:1170px;height:1px;background:#d6d6d6;"></div>
<div style="left:0px;top:914px;width:1170px;height:1px;background:#f7f7f7;"></div>
<div style="left:0px;top:915px;width:1170px;height:25px;background:#f0f0f0;"></div>
<div style="left:0px;top:940px;width:1170px;height:1px;background:#fafafa;"></div>
<div style="left:0px;top:941px;width:1171px;height:5px;background:linear-gradient(#bdbdbd,#d0d0d0 40%,#d3d3d3);"></div>
<div style="left:572px;top:941px;width:3px;height:5px;background:#555;"></div>
<div style="left:580px;top:941px;width:2px;height:5px;background:#555;"></div>
<div class="t" style="left:3.50px;top:921.80px;font-size:18px;line-height:18px;color:#000;">InterTechno [A, 1]</div>
<div style="left:299px;top:915px;width:1px;height:24px;background:#d5d5d5;"></div>
<div style="left:740px;top:915px;width:1px;height:24px;background:#d5d5d5;"></div>
<div style="left:965px;top:915px;width:1px;height:24px;background:#d5d5d5;"></div>
<div class="t" style="left:747.50px;top:921.30px;font-size:18px;line-height:18px;color:#000;transform:scaleX(1.0327);transform-origin:0 0;">Light-Manager Pro</div>
<div style="left:1165px;top:926px;width:2px;height:2px;background:#b8b8b8;"></div>
<div style="left:1160.5px;top:930.5px;width:2.0px;height:2.0px;background:#b8b8b8;"></div>
<div style="left:1165px;top:930.5px;width:2px;height:2.0px;background:#b8b8b8;"></div>
<div style="left:1156px;top:935px;width:2px;height:2px;background:#b8b8b8;"></div>
<div style="left:1160.5px;top:935px;width:2.0px;height:2px;background:#b8b8b8;"></div>
<div style="left:1165px;top:935px;width:2px;height:2px;background:#b8b8b8;"></div>
</body></html>
